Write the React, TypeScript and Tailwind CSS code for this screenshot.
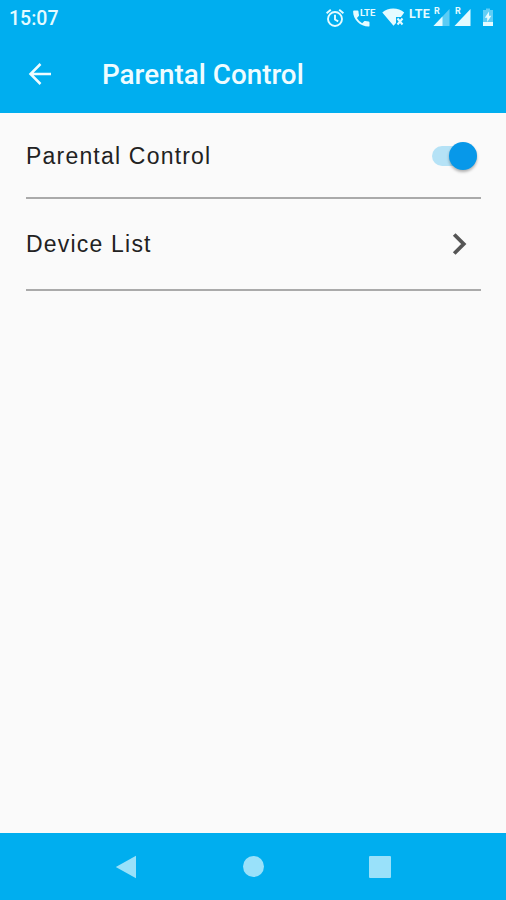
import { useState } from 'react'

function AlarmIcon() {
  return (
    <svg width="19" height="20" viewBox="0 0 19 20" fill="none" stroke="currentColor" strokeWidth="1.9">
      <circle cx="9" cy="11" r="7" />
      <path d="M.6 5.200 4.800 1.700M17.400 5.200 13.200 1.700M9 6.800v4.700l3.200 1.900" />
    </svg>
  )
}

function PhoneIcon() {
  return (
    <svg width="17" height="17" viewBox="0 0 17 17" fill="currentColor">
      <path d="M1 .6h3.600c.5 0 .9.4.9.9 0 1.200.2 2.300.5 3.400.1.300 0 .7-.2 1L3.900 8a13 13 0 0 0 5.300 5.200l2-2c.300-.300.600-.3 1-.2 1.100.3 2.200.5 3.400.5.500 0 .9.4.9.9v3.300c0 .5-.4.9-.9.9C7.200 16.600.1 9.500.1 1.500c0-.5.4-.9.9-.9z" />
    </svg>
  )
}

function WifiOffIcon() {
  return (
    <svg width="23" height="18" viewBox="0 0 23 18">
      <path d="M.3 4.600C3.200 2 7 .6 11.200.6S19.300 2 22.200 4.600L19 9H14V15L11.500 17.800Z" fill="currentColor" />
      <path d="m15.500 10.500 5 6M20.500 10.500l-5 6" stroke="currentColor" strokeWidth="2" />
    </svg>
  )
}

function SignalIcon({ weak }: { weak?: boolean }) {
  return (
    <svg width="17" height="18" viewBox="0 0 17 18" fill="currentColor">
      <path d="M16.500 1v17H.5z" opacity={weak ? 0.4 : 1} />
      {weak && <path d="M9.500 8.400V18H.5z" />}
    </svg>
  )
}

function BatteryIcon() {
  return (
    <svg width="12" height="19" viewBox="0 0 12 19">
      <path d="M4 .5h4V2h3v12H1V2h3z" fill="currentColor" opacity=".42" />
      <path d="M1 14h10v4H1z" fill="currentColor" />
      <path d="M7 3.500 2.800 9.800h2.400V14L9.400 7.800H7z" fill="currentColor" />
    </svg>
  )
}

function StatusBar() {
  return (
    <div className="flex h-9 items-start justify-between pl-[9px] pr-3 text-[#e4fbff]">
      <span className="mt-1.5 text-[19.5px] leading-[26px] font-medium">15:07</span>
      <div className="flex pt-2">
        <AlarmIcon />
        <div className="relative ml-2 mt-0.5 w-[22px]">
          <PhoneIcon />
          <span className="absolute -top-px left-[7px] text-[9.5px] leading-[8px] font-bold">LTE</span>
        </div>
        <div className="ml-[7px]">
          <WifiOffIcon />
        </div>
        <span className="ml-1 w-6 text-[12.5px] leading-[11px] font-bold tracking-[0.3px]">LTE</span>
        <div className="relative">
          <SignalIcon weak />
          <span className="absolute top-0 left-px text-[9px] leading-[7px] font-bold">R</span>
        </div>
        <div className="relative ml-1">
          <SignalIcon />
          <span className="absolute top-0 left-px text-[9px] leading-[7px] font-bold">R</span>
        </div>
        <div className="ml-[11px]">
          <BatteryIcon />
        </div>
      </div>
    </div>
  )
}

export default function App() {
  const [enabled, setEnabled] = useState(true)

  return (
    <div className="flex h-[900px] w-[506px] flex-col overflow-hidden bg-[#fafafa] font-['Roboto',sans-serif]">
      <header className="h-[113px] bg-[#00aeef] text-[#effcff]">
        <StatusBar />
        <div className="flex h-[77px] items-center">
          <button type="button" aria-label="Back" className="ml-[28px] w-6">
            <svg width="24" height="24" viewBox="0 0 24 24" fill="none" stroke="currentColor" strokeWidth="2.500">
              <path d="M23 11H2.500M12.500 1 2.500 11l10 10" />
            </svg>
          </button>
          <h1 className="ml-[50px] text-[27.8px] leading-8 font-medium">Parental Control</h1>
        </div>
      </header>

      <main className="flex-1 pr-[25px] pl-[26px] font-['Liberation_Sans',Arial,sans-serif] text-[#222]">
        <div className="flex h-[86px] items-center justify-between border-b-2 border-[#aaa]">
          <span className="pt-0.5 text-[23px] leading-7 tracking-[1.2px]">Parental Control</span>
          <button
            type="button"
            role="switch"
            aria-checked={enabled}
            aria-label="Parental Control"
            onClick={() => setEnabled(!enabled)}
            className={`mt-px mr-1 flex h-[20px] w-[45px] items-center rounded-full ${
              enabled ? 'justify-end bg-[#b5e2f6]' : 'justify-start bg-gray-300'
            }`}
          >
            <span
              className={`size-[28px] rounded-full shadow-[0_2px_3px_rgba(0,0,0,0.3)] ${
                enabled ? 'bg-[#0798e9]' : 'bg-white'
              }`}
            />
          </button>
        </div>
        <div className="flex h-[92px] items-center justify-between border-b-2 border-[#aaa]">
          <span className="text-[23px] leading-7 tracking-[1.2px]">Device List</span>
          <svg width="16" height="24" viewBox="0 0 16 24" className="mr-[13px]" fill="none" stroke="#555" strokeWidth="3.800">
            <path d="m2.200 2.500 9.500 9.500-9.500 9.500" />
          </svg>
        </div>
      </main>

      <nav className="flex h-[67px] items-center bg-[#00aeef] text-[#99e1fa]">
        <svg width="22" height="24" viewBox="0 0 22 24" className="ml-[115px]" fill="currentColor">
          <path d="M21 .8v22.400L.8 12z" />
        </svg>
        <span className="ml-[106px] size-[21px] rounded-full bg-current" />
        <span className="ml-[105px] size-[22px] rounded-[1px] bg-current" />
      </nav>
    </div>
  )
}
